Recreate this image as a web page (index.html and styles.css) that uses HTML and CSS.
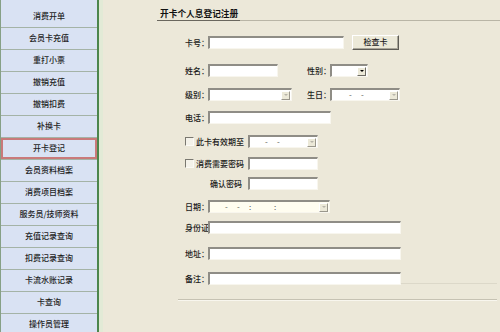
FILE: index.html
```html
<!DOCTYPE html>
<html>
<head>
<meta charset="utf-8">
<title>开卡登记</title>
<link rel="stylesheet" href="styles.css">
</head>
<body>
<div class="page">
  <div class="navwrap">
    <ul class="nav">
      <li>消费开单</li>
      <li>会员卡充值</li>
      <li>重打小票</li>
      <li>撤销充值</li>
      <li>撤销扣费</li>
      <li>补换卡</li>
      <li class="active">开卡登记</li>
      <li>会员资料档案</li>
      <li>消费项目档案</li>
      <li>服务员/技师资料</li>
      <li>充值记录查询</li>
      <li>扣费记录查询</li>
      <li>卡流水账记录</li>
      <li>卡查询</li>
      <li>操作员管理</li>
    </ul>
  </div>
  <div class="main">
    <div class="title"><span>开卡个人息登记注册</span></div>
    <div class="form">
      <div class="row">
        <span class="lbl">卡号：</span><span class="inp w136"></span><span class="btn">检查卡</span>
      </div>
      <div class="row">
        <span class="lbl">姓名：</span><span class="inp w70"></span>
        <span class="lbl ml29">性别：</span><span class="sel w38"><span class="val"></span><span class="arr on"></span></span>
      </div>
      <div class="row">
        <span class="lbl">级别：</span><span class="sel w84"><span class="val"></span><span class="arr"></span></span>
        <span class="lbl ml15">生日：</span><span class="sel w70"><span class="val v-bd"><span class="g1">-</span><span class="g1">-</span></span><span class="arr"></span></span>
      </div>
      <div class="row">
        <span class="lbl">电话：</span><span class="inp w123"></span>
      </div>
      <div class="row">
        <span class="chk"></span><span class="clbl">此卡有效期至</span><span class="sel w70"><span class="val v-exp"><span class="g1">-</span><span class="g1">-</span></span><span class="arr"></span></span>
      </div>
      <div class="row">
        <span class="chk"></span><span class="clbl">消费需要密码</span><span class="inp w70"></span>
      </div>
      <div class="row">
        <span class="clbl ind">确认密码</span><span class="inp w70"></span>
      </div>
      <div class="row">
        <span class="lbl">日期：</span><span class="sel w122 cream"><span class="val v-dt"><span class="g1">-</span><span class="g1">-</span><span class="g2">:</span><span class="g1">:</span></span><span class="arr"></span></span>
      </div>
      <div class="row">
        <span class="lbl">身份证</span><span class="inp w193"></span>
      </div>
      <div class="row">
        <span class="lbl">地址：</span><span class="inp w193"></span>
      </div>
      <div class="row">
        <span class="lbl">备注：</span><span class="inp w193"></span><span class="tail"></span>
      </div>
    </div>
    <div class="rule"></div>
  </div>
</div>
</body>
</html>
```
FILE: styles.css
```css
* { box-sizing: border-box; margin: 0; padding: 0; }
html, body { width: 500px; height: 332px; overflow: hidden; }
body {
  background: #ece8d9;
  font-family: "Noto Sans CJK SC", "Noto Sans", sans-serif;
  font-size: 8px;
  color: #1a1a1a;
}
.page { display: flex; height: 332px; }

/* sidebar */
.navwrap { width: 103px; flex: none; padding-right: 4px; background: #e2ead6; }
.nav {
  list-style: none;
  height: 100%;
  background: #d9e2f3;
  border-left: 1px solid #86a086;
  border-right: 2px solid #4c864c;
  padding-top: 6px;
}
.nav li {
  height: 22px;
  line-height: 20px;
  border-bottom: 1px solid #a4b3a6;
  text-align: center;
  font-weight: 500;
  color: #1e1e1e;
  white-space: nowrap;
}
.nav li.active { box-shadow: inset 0 0 0 2px #c97a7a; }

/* main */
.main { flex: 1; display: flex; flex-direction: column; }
.title {
  margin-left: 54px;
  padding: 8px 0 0 3px;
  height: 21px;
  line-height: 12px;
  border-bottom: 1px solid #b9b5a6;
  font-weight: bold;
  font-size: 8.7px;
  color: #111;
}
.title span {
  display: inline-block;
  vertical-align: top;
  height: 13px;
  margin-left: -3px;
  padding: 0 2px 0 3px;
  border-bottom: 1px solid #6a675e;
}

.form {
  margin: 15px 0 0 82px;
  display: grid;
  grid-template-rows: 28px 24px 23px 24px 22px 20px 23px 21px 26px 25px 13px;
}
.row { display: flex; align-items: flex-start; }
.lbl { width: 23px; flex: none; height: 13px; line-height: 13px; white-space: nowrap; font-weight: 500; }
.ml29 { margin-left: 29px; }
.ml15 { margin-left: 15px; }
.clbl { flex: none; height: 13px; line-height: 13px; margin-left: 2px; margin-right: 4px; white-space: nowrap; font-weight: 500; }
.clbl.ind { margin-left: 25px; margin-right: 6px; }

.inp, .sel {
  flex: none;
  height: 13px;
  background: #fff;
  border-top: 2px solid #8f8d86;
  border-left: 2px solid #8f8d86;
  border-right: 1px solid #f8f6ee;
  border-bottom: 1px solid #f8f6ee;
}
.w136 { width: 136px; }
.w70 { width: 70px; }
.w38 { width: 38px; }
.w84 { width: 84px; }
.w123 { width: 123px; }
.w122 { width: 122px; }
.w193 { width: 193px; }

.sel { display: flex; align-items: center; padding-right: 1px; }
.sel.cream { background: #fffdf0; }
.val { flex: 1; display: flex; line-height: 10px; font-size: 8px; color: #555; white-space: nowrap; }
.val .g1 { width: 12px; }
.val .g2 { width: 25px; }
.v-bd { padding-left: 17px; }
.v-exp { padding-left: 15px; }
.v-dt { padding-left: 15px; }
.arr {
  flex: none;
  width: 9px;
  height: 9px;
  background: #ece9d8;
  border: 1px solid;
  border-color: #fff #9a978c #9a978c #fff;
  display: flex;
  align-items: center;
  justify-content: center;
}
.arr::after {
  content: "";
  border-left: 2px solid transparent;
  border-right: 2px solid transparent;
  border-top: 2px solid #b8b5aa;
}
.arr.on { border-color: #fff #6d6b64 #6d6b64 #fff; }
.arr.on::after { border-top-color: #000; }

.btn {
  flex: none;
  margin-left: 8px;
  margin-top: -1px;
  width: 47px;
  height: 15px;
  line-height: 12px;
  text-align: center;
  background: #ece9d8;
  border: 1px solid;
  border-color: #fff #5e5c55 #5e5c55 #fff;
  box-shadow: inset -1px -1px 0 #a9a699;
  font-weight: 500;
}

.chk {
  flex: none;
  width: 9px;
  height: 9px;
  margin-top: 2px;
  background: #f4f2ea;
  border: 1px solid;
  border-color: #7a7870 #fbfaf5 #fbfaf5 #7a7870;
}

.tail {
  flex: 1;
  height: 12px;
  margin-right: 3px;
  border-bottom: 1px solid #dcd8c9;
}

.rule {
  margin: 14px 3px 0 75px;
  height: 2px;
  border-top: 1px solid #c6c2b3;
  border-bottom: 1px solid #f8f6ee;
}
```
